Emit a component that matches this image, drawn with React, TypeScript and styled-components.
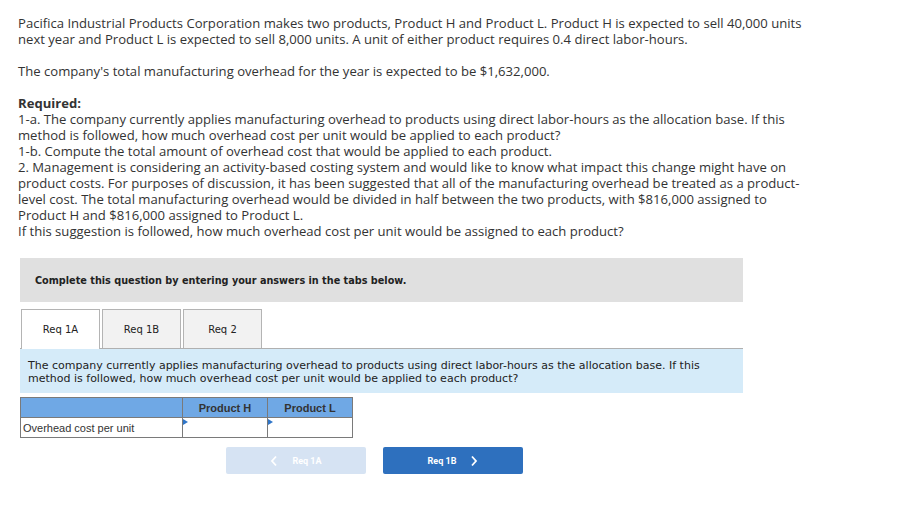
import React from "react";
import styled, { createGlobalStyle } from "styled-components";

const GlobalStyle = createGlobalStyle`
  html, body {
    margin: 0;
    padding: 0;
    background: #fff;
  }
`;

const intro = [
  "Pacifica Industrial Products Corporation makes two products, Product H and Product L. Product H is expected to sell 40,000 units",
  "next year and Product L is expected to sell 8,000 units. A unit of either product requires 0.4 direct labor-hours.",
];

const required = [
  "1-a. The company currently applies manufacturing overhead to products using direct labor-hours as the allocation base. If this",
  "method is followed, how much overhead cost per unit would be applied to each product?",
  "1-b. Compute the total amount of overhead cost that would be applied to each product.",
  "2. Management is considering an activity-based costing system and would like to know what impact this change might have on",
  "product costs. For purposes of discussion, it has been suggested that all of the manufacturing overhead be treated as a product-",
  "level cost. The total manufacturing overhead would be divided in half between the two products, with $816,000 assigned to",
  "Product H and $816,000 assigned to Product L.",
  "If this suggestion is followed, how much overhead cost per unit would be assigned to each product?",
];

const tabs = ["Req 1A", "Req 1B", "Req 2"];

export default function App() {
  return (
    <Page>
      <GlobalStyle />
      <Question>
        <Paragraph>
          {intro.map((l) => (
            <Line key={l}>{l}</Line>
          ))}
        </Paragraph>
        <Paragraph>
          <Line>The company's total manufacturing overhead for the year is expected to be $1,632,000.</Line>
        </Paragraph>
        <Paragraph>
          <Strong>Required:</Strong>
          {required.map((l) => (
            <Line key={l}>{l}</Line>
          ))}
        </Paragraph>
      </Question>

      <Instruction>Complete this question by entering your answers in the tabs below.</Instruction>

      <TabBar>
        {tabs.map((t, i) => (
          <Tab key={t} $active={i === 0}>
            {t}
          </Tab>
        ))}
      </TabBar>

      <InfoBox>
        The company currently applies manufacturing overhead to products using direct labor-hours as the allocation base. If this
        <br />
        method is followed, how much overhead cost per unit would be applied to each product?
      </InfoBox>

      <Table>
        <thead>
          <tr>
            <HeadCell $w={162}></HeadCell>
            <HeadCell $w={85}>Product H</HeadCell>
            <HeadCell $w={85}>Product L</HeadCell>
          </tr>
        </thead>
        <tbody>
          <tr>
            <LabelCell>Overhead cost per unit</LabelCell>
            <InputCell>
              <Marker />
            </InputCell>
            <InputCell>
              <Marker />
            </InputCell>
          </tr>
        </tbody>
      </Table>

      <NavRow>
        <NavButton $disabled>
          <Chevron viewBox="0 0 8 12">
            <path d="M6 1.5 L2 6 L6 10.5" />
          </Chevron>
          Req 1A
        </NavButton>
        <NavButton>
          Req 1B
          <Chevron viewBox="0 0 8 12">
            <path d="M2 1.5 L6 6 L2 10.5" />
          </Chevron>
        </NavButton>
      </NavRow>
    </Page>
  );
}

const Page = styled.div`
  width: 921px;
  padding: 15px 0 0 20px;
  box-sizing: border-box;
`;

const Question = styled.div`
  margin-left: -2px;
  font-family: "Open Sans", "Liberation Sans", sans-serif;
  font-size: 13.1px;
  line-height: 16px;
  color: #333;
`;

const Paragraph = styled.div`
  margin-bottom: 16px;
  &:last-child {
    margin-bottom: 0;
  }
`;

const Line = styled.div`
  white-space: nowrap;
`;

const Strong = styled.div`
  font-weight: 700;
`;

const Instruction = styled.div`
  margin-top: 19px;
  width: 723px;
  height: 44px;
  box-sizing: border-box;
  padding: 0 15px;
  display: flex;
  align-items: center;
  background: #e0e0e0;
  font-family: "DejaVu Sans", Verdana, sans-serif;
  font-size: 9.7px;
  font-weight: 700;
  color: #222;
`;

const TabBar = styled.div`
  margin-top: 7px;
  width: 723px;
  display: flex;
  gap: 2px;
  padding-left: 1px;
  box-sizing: border-box;
  border-bottom: 1px solid #b0b0b0;
`;

const Tab = styled.div<{ $active?: boolean }>`
  width: 79px;
  box-sizing: border-box;
  display: flex;
  align-items: center;
  justify-content: center;
  border: 1px solid #b4b4b4;
  border-bottom: none;
  margin-bottom: ${(p) => (p.$active ? "-1px" : "0")};
  height: ${(p) => (p.$active ? "40px" : "39px")};
  background: ${(p) => (p.$active ? "#fff" : "#f2f2f2")};
  font-family: "DejaVu Sans", Verdana, sans-serif;
  font-size: 10px;
  color: #222;
`;

const InfoBox = styled.div`
  width: 723px;
  height: 44px;
  box-sizing: border-box;
  padding: 10px 8px 0;
  background: #d5ebf9;
  font-family: "DejaVu Sans", Verdana, sans-serif;
  font-size: 11px;
  line-height: 13px;
  color: #222;
  white-space: nowrap;
`;

const Table = styled.table`
  margin-top: 4px;
  border-collapse: collapse;
  font-family: "Liberation Sans", Arial, sans-serif;
  font-size: 11px;
`;

const HeadCell = styled.th<{ $w: number }>`
  width: ${(p) => p.$w}px;
  height: 20px;
  padding: 0;
  box-sizing: border-box;
  background: #6fa8e5;
  border: 1px solid #7a7a7a;
  color: #333;
  font-weight: 700;
  text-align: center;
`;

const LabelCell = styled.td`
  height: 19px;
  padding: 0 2px;
  border: 1px solid #7a7a7a;
  color: #333;
`;

const InputCell = styled.td`
  position: relative;
  padding: 0;
  border: 1px solid #7a7a7a;
`;

const Marker = styled.span`
  position: absolute;
  top: 1px;
  left: 0;
  width: 0;
  height: 0;
  border-top: 3px solid transparent;
  border-bottom: 3px solid transparent;
  border-left: 5px solid #2f75c8;
`;

const NavRow = styled.div`
  margin-top: 9px;
  padding-left: 206px;
  display: flex;
  gap: 17px;
`;

const NavButton = styled.div<{ $disabled?: boolean }>`
  width: 140px;
  height: 27px;
  border-radius: 2px;
  display: flex;
  align-items: center;
  justify-content: center;
  gap: 14px;
  background: ${(p) => (p.$disabled ? "#d6e3f3" : "#2e70be")};
  color: #fff;
  font-family: "Roboto", "Liberation Sans", sans-serif;
  font-size: 9px;
  font-weight: 700;
`;

const Chevron = styled.svg`
  width: 8px;
  height: 12px;
  fill: none;
  stroke: currentColor;
  stroke-width: 1.8;
`;
